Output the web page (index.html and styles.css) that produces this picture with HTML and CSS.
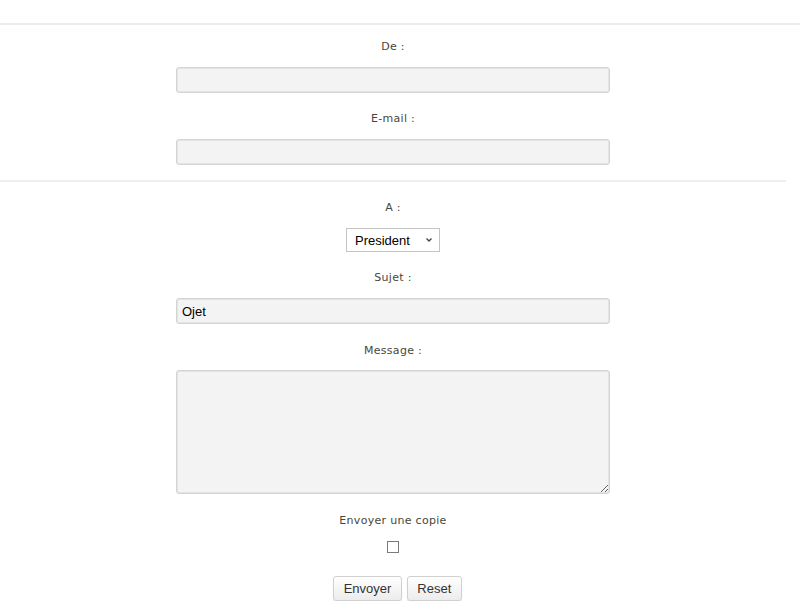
FILE: index.html
```html
<!DOCTYPE html>
<html lang="fr">
<head>
<meta charset="utf-8">
<title>Contact</title>
<link rel="stylesheet" href="styles.css">
</head>
<body>
<div class="top-rule"></div>
<form class="contact-form" onsubmit="return false;">
  <section class="group group-sender">
    <div class="field">
      <label class="field-label" for="de">De :</label>
      <input class="text-input" type="text" id="de">
    </div>
    <div class="field">
      <label class="field-label" for="email">E-mail :</label>
      <input class="text-input" type="text" id="email">
    </div>
  </section>
  <section class="group group-message">
    <div class="field field-dest">
      <label class="field-label" for="dest">A :</label>
      <div class="select-wrap">
        <select class="select-input" id="dest">
          <option>President</option>
        </select>
        <svg class="select-arrow" width="8" height="6" viewBox="0 0 8 6"><path d="M1.5 1.5 L4 4 L6.5 1.5" fill="none" stroke="#444" stroke-width="1.3"/></svg>
      </div>
    </div>
    <div class="field">
      <label class="field-label" for="sujet">Sujet :</label>
      <input class="text-input" type="text" id="sujet" value="Ojet">
    </div>
    <div class="field field-message">
      <label class="field-label" for="message">Message :</label>
      <textarea class="text-area" id="message"></textarea>
    </div>
    <div class="field field-copy">
      <label class="field-label" for="copie">Envoyer une copie</label>
      <input class="check" type="checkbox" id="copie">
    </div>
    <div class="actions">
      <button class="btn" type="submit">Envoyer</button>
      <button class="btn" type="reset">Reset</button>
    </div>
  </section>
</form>
</body>
</html>
```
FILE: styles.css
```css
* { box-sizing: border-box; }
html, body { margin: 0; padding: 0; background: #fff; }
body { font-family: "DejaVu Sans", Verdana, sans-serif; }

.top-rule {
  margin-top: 23px;
  height: 2px;
  background: #ececec;
  width: 800px;
}

.contact-form {
  width: 786px;
}

.group {
  display: flex;
  flex-direction: column;
  align-items: center;
}
.group-sender {
  padding-top: 13px;
  border-bottom: 2px solid #efefef;
}
.group-sender .field:last-child { margin-bottom: 15px; }
.group-message {
  padding-top: 17px;
}

.field {
  display: flex;
  flex-direction: column;
  align-items: center;
  width: 100%;
  margin-bottom: 17px;
}
.group-message .field { margin-bottom: 18px; }
.group-message .field-dest { margin-bottom: 17px; }

.field-label {
  font-size: 11px;
  line-height: 18px;
  color: #47473a;
  letter-spacing: 0.3px;
  margin-bottom: 11px;
}
.field-message .field-label { margin-bottom: 10px; }

.text-input, .text-area {
  width: 434px;
  height: 26px;
  background: #f3f3f3;
  border: 1px solid #d4d4d4;
  border-radius: 3px;
  box-shadow: inset 0 0 0 1px #e4e4e4;
  font-family: "Liberation Sans", Arial, sans-serif;
  font-size: 13px;
  color: #000;
  padding: 0 5px;
  outline: none;
}
.text-area {
  height: 124px;
  resize: both;
  padding: 4px 5px;
}

.select-wrap {
  position: relative;
  width: 94px;
  height: 24px;
}
.select-input {
  appearance: none;
  -webkit-appearance: none;
  width: 94px;
  height: 24px;
  border: 1px solid #c4c4c4;
  border-radius: 0;
  background: #fff;
  font-family: "Liberation Sans", Arial, sans-serif;
  font-size: 13px;
  color: #000;
  padding: 0 0 0 8px;
  outline: none;
}
.select-arrow {
  position: absolute;
  right: 7px;
  top: 9px;
  pointer-events: none;
}

.group-message .field-copy { margin-bottom: 23px; }
.check {
  appearance: none;
  -webkit-appearance: none;
  width: 12px;
  height: 12px;
  margin: 0;
  border: 1px solid #7a7a7a;
  background: #fff;
  border-radius: 0;
}

.actions {
  display: flex;
  gap: 5px;
  justify-content: center;
  padding-left: 9px;
}
.btn {
  height: 25px;
  padding: 0 9.5px;
  font-family: "Liberation Sans", Arial, sans-serif;
  font-size: 13px;
  color: #333;
  background: linear-gradient(#ffffff, #ececec);
  border: 1px solid #d0d0d0;
  border-radius: 3px;
  box-shadow: 0 1px 1px rgba(0,0,0,0.12);
}
```
